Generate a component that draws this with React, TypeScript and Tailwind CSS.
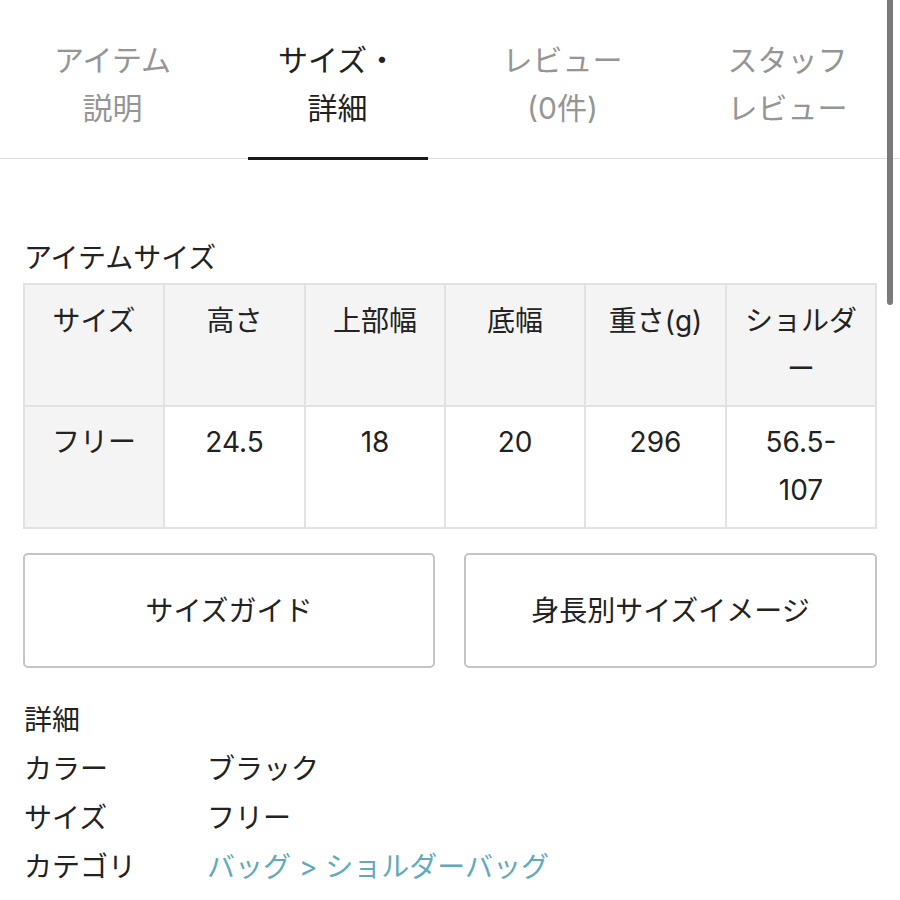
import React from "react";

const font = { fontFamily: 'Inter, "Noto Sans CJK JP", "Noto Sans", sans-serif' };

const tabs = [
  { lines: ["アイテム", "説明"], active: false },
  { lines: ["サイズ・", "詳細"], active: true },
  { lines: ["レビュー", "(0件)"], active: false },
  { lines: ["スタッフ", "レビュー"], active: false },
];

const headers = ["サイズ", "高さ", "上部幅", "底幅", "重さ(g)", "ショルダー"];
const values = ["フリー", "24.5", "18", "20", "296", "56.5-107"];

const details = [
  { label: "カラー", value: "ブラック", link: false },
  { label: "サイズ", value: "フリー", link: false },
  { label: "カテゴリ", value: "バッグ > ショルダーバッグ", link: true },
];

export default function App() {
  return (
    <div className="relative w-[900px] h-[900px] overflow-hidden bg-white text-[#222]" style={font}>
      {/* tabs */}
      <div className="flex border-b border-[#dedede]">
        {tabs.map((tab, i) => (
          <div key={i} className="relative flex w-[225px] justify-center pt-[36px] pb-[26px]">
            <div
              className={
                "text-center text-[30px] leading-[48px] " +
                (tab.active ? "text-[#222]" : "text-[#959595]")
              }
            >
              {tab.lines.map((l) => (
                <div key={l}>{l}</div>
              ))}
            </div>
            {tab.active && (
              <div className="absolute bottom-[-2px] left-[23px] h-[3px] w-[180px] bg-[#1a1a1a]" />
            )}
          </div>
        ))}
      </div>

      <div className="px-[23px]">
        <div className="mt-[80px] text-[28px] leading-[38px] pl-[1px]">アイテムサイズ</div>

        {/* size table */}
        <div className="mt-[6px] grid grid-cols-[140px_141px_140px_140px_141px_1fr] border border-[#e2e2e2]">
          {headers.map((h) => (
            <div
              key={h}
              className="h-[122px] border border-[#e2e2e2] bg-[#f4f4f4] px-[12px] pt-[12px] text-center text-[28px] leading-[48px]"
            >
              {h === "ショルダー" ? (
                <>
                  <div>ショルダ</div>
                  <div>ー</div>
                </>
              ) : (
                h
              )}
            </div>
          ))}
          {values.map((v, i) => (
            <div
              key={i}
              className={
                "h-[122px] border border-[#e2e2e2] px-[12px] pt-[11px] text-center text-[28px] leading-[48px] " +
                (i === 0 ? "bg-[#f4f4f4]" : "bg-white")
              }
            >
              {v === "56.5-107" ? (
                <>
                  <div>56.5-</div>
                  <div>107</div>
                </>
              ) : (
                v
              )}
            </div>
          ))}
        </div>

        {/* buttons */}
        <div className="mt-[24px] flex gap-[29px]">
          <button className="flex h-[115px] w-[412px] items-center justify-center rounded-[5px] border-2 border-[#c4c4c4] bg-white text-[28px] text-[#222]">
            サイズガイド
          </button>
          <button className="flex h-[115px] flex-1 items-center justify-center rounded-[5px] border-2 border-[#c4c4c4] bg-white text-[28px] text-[#222]">
            身長別サイズイメージ
          </button>
        </div>

        {/* details */}
        <div className="mt-[28px] pl-[1px] text-[28px] leading-[49px]">
          <div>詳細</div>
          {details.map((d) => (
            <div key={d.label} className="flex">
              <div className="w-[183px]">{d.label}</div>
              <div className={d.link ? "text-[#62a9ba]" : ""}>{d.value}</div>
            </div>
          ))}
        </div>
      </div>

      {/* scrollbar thumb */}
      <div className="absolute right-[7px] top-0 h-[305px] w-[6px] rounded-b-full bg-[#7a7a7a]" />
    </div>
  );
}
